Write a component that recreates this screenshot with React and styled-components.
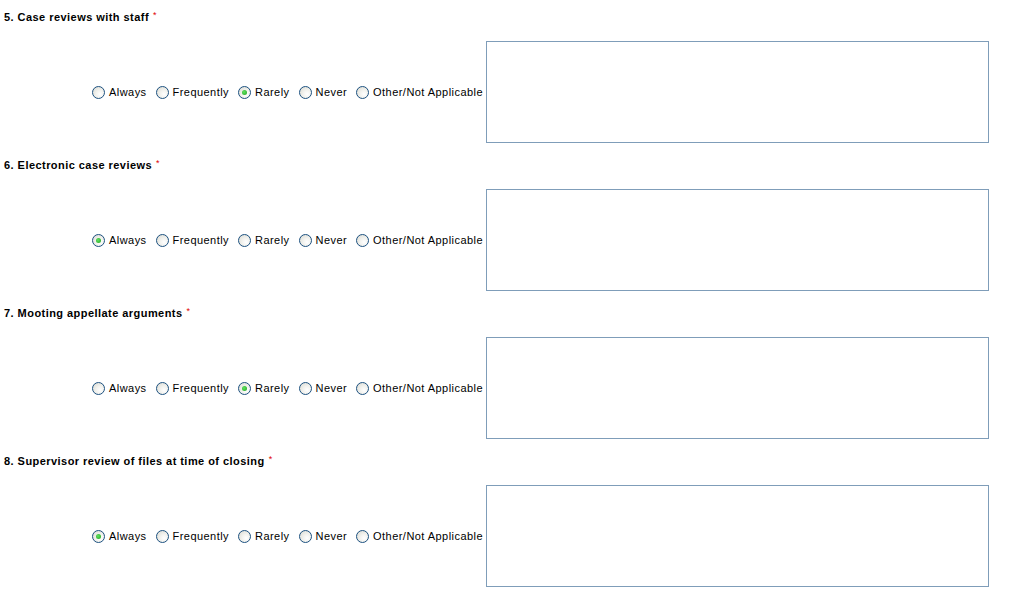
import React from 'react';
import styled, { createGlobalStyle } from 'styled-components';

const GlobalStyle = createGlobalStyle`
  body {
    margin: 0;
    background: #ffffff;
    font-family: 'Liberation Sans', Arial, sans-serif;
  }
`;

const Page = styled.div`
  width: 1015px;
  padding-top: 8px;
`;

const Question = styled.div`
  display: flex;
  flex-direction: column;
  padding-bottom: 13px;
`;

const QuestionLabel = styled.div`
  height: 14px;
  line-height: 14px;
  padding-left: 4px;
  margin-bottom: 19px;
  font-size: 11px;
  font-weight: bold;
  letter-spacing: 0.45px;
  color: #000;
`;

const Required = styled.span`
  color: #e00000;
  font-size: 9px;
  font-weight: normal;
  margin-left: 4px;
  vertical-align: 3px;
`;

const Row = styled.div`
  display: flex;
  align-items: center;
`;

const Choices = styled.div`
  width: 483px;
  display: flex;
  justify-content: flex-end;
  align-items: center;
  gap: 9px;
`;

const Choice = styled.label`
  display: flex;
  align-items: center;
  gap: 4px;
  font-size: 11px;
  letter-spacing: 0.45px;
  color: #000;
  line-height: 14px;
`;

const Radio = styled.span`
  position: relative;
  width: 13px;
  height: 13px;
  box-sizing: border-box;
  border-radius: 50%;
  border: 1px solid #1c5180;
  background: radial-gradient(circle at 65% 65%, #ffffff 0%, #f2f2ee 40%, #d8d8d0 100%);

  &::after {
    content: '';
    display: ${(p) => (p.checked ? 'block' : 'none')};
    position: absolute;
    left: 3px;
    top: 3px;
    width: 5px;
    height: 5px;
    border-radius: 50%;
    background: radial-gradient(circle at 40% 40%, #5fe35f 0%, #21a121 100%);
  }
`;

const Comment = styled.textarea`
  margin-left: 3px;
  width: 503px;
  height: 102px;
  box-sizing: border-box;
  border: 1px solid #7f9db9;
  resize: none;
  padding: 2px;
  font-family: 'Liberation Sans', Arial, sans-serif;
  font-size: 11px;
`;

const options = ['Always', 'Frequently', 'Rarely', 'Never', 'Other/Not Applicable'];

const questions = [
  { n: 5, text: 'Case reviews with staff', value: 'Rarely' },
  { n: 6, text: 'Electronic case reviews', value: 'Always' },
  { n: 7, text: 'Mooting appellate arguments', value: 'Rarely' },
  { n: 8, text: 'Supervisor review of files at time of closing', value: 'Always' },
];

const App = () => {
  return (
    <Page>
      <GlobalStyle />
      {questions.map((q) => (
        <Question key={q.n}>
          <QuestionLabel>
            {q.n}. {q.text}
            <Required>*</Required>
          </QuestionLabel>
          <Row>
            <Choices>
              {options.map((o) => (
                <Choice key={o}>
                  <Radio checked={q.value === o} />
                  {o}
                </Choice>
              ))}
            </Choices>
            <Comment />
          </Row>
        </Question>
      ))}
    </Page>
  );
};

export default App;
